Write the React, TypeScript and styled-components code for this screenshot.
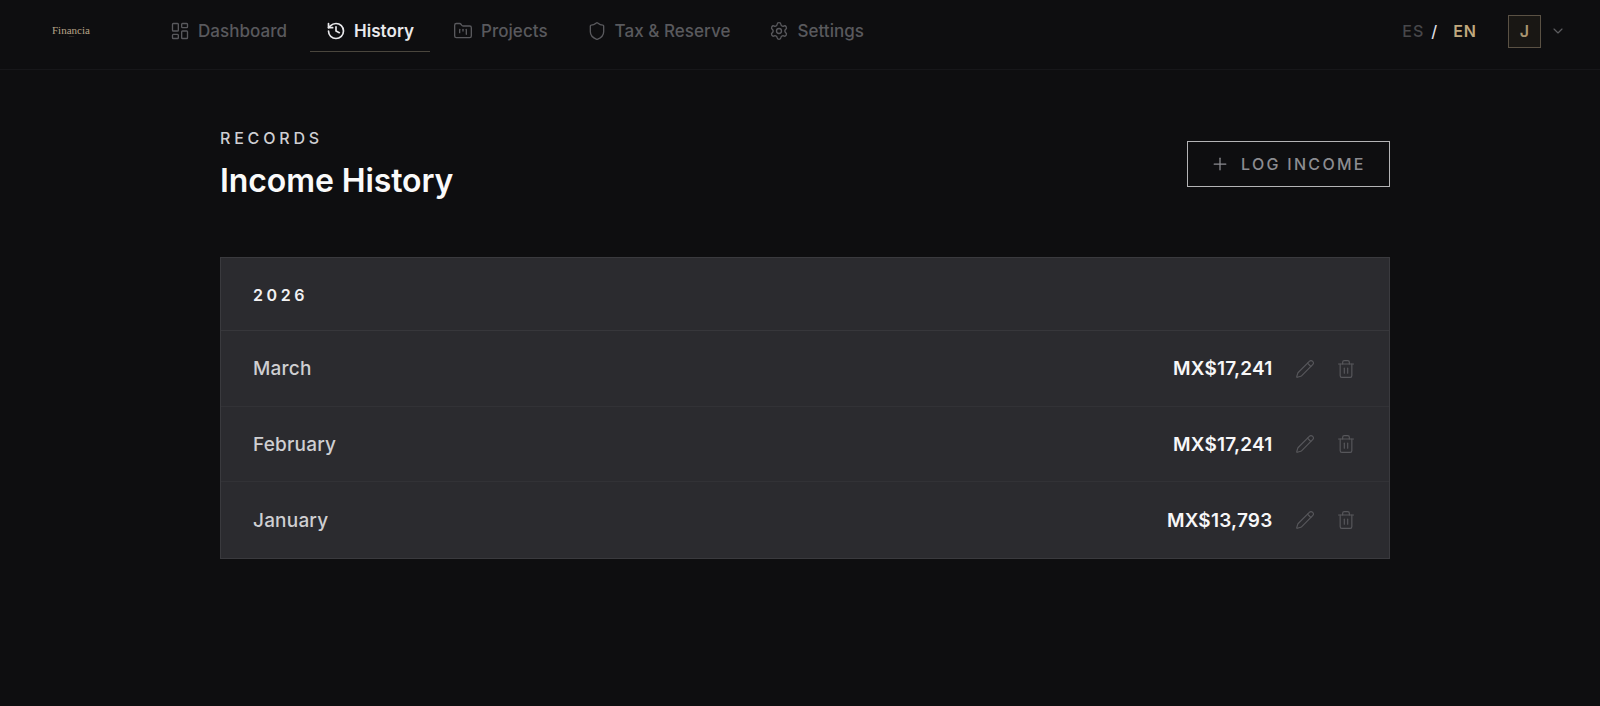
import styled, { createGlobalStyle } from "styled-components";
import {
  ChevronDown,
  FolderKanban,
  History,
  LayoutDashboard,
  Pencil,
  Plus,
  Settings,
  Shield,
  Trash2,
} from "lucide-react";

const GlobalStyle = createGlobalStyle`
  html, body {
    margin: 0;
    padding: 0;
    background: #0e0e10;
    font-family: "Inter", "Liberation Sans", sans-serif;
    font-optical-sizing: none;
  }
  * {
    box-sizing: border-box;
  }
`;

const records = [
  { month: "March", amount: "MX$17,241" },
  { month: "February", amount: "MX$17,241" },
  { month: "January", amount: "MX$13,793" },
];

const navItems = [
  { label: "Dashboard", icon: LayoutDashboard },
  { label: "History", icon: History, active: true },
  { label: "Projects", icon: FolderKanban },
  { label: "Tax & Reserve", icon: Shield },
  { label: "Settings", icon: Settings },
];

const App = () => {
  return (
    <Page>
      <GlobalStyle />
      <Header>
        <Logo>
          Financia
          <LogoSub>studio</LogoSub>
        </Logo>
        <Nav>
          {navItems.map((item) => (
            <NavItem key={item.label} $active={item.active}>
              <item.icon size={20} strokeWidth={item.active ? 2 : 1.6} />
              {item.label}
            </NavItem>
          ))}
        </Nav>
        <HeaderRight>
          <LangSwitch>
            <Lang>ES</Lang>
            <Slash>/</Slash>
            <Lang $active>EN</Lang>
          </LangSwitch>
          <UserMenu>
            <Avatar>J</Avatar>
            <ChevronDown size={16} strokeWidth={1.75} color="#5c5c60" />
          </UserMenu>
        </HeaderRight>
      </Header>
      <Main>
        <TitleRow>
          <div>
            <Eyebrow>RECORDS</Eyebrow>
            <Title>Income History</Title>
          </div>
          <LogButton>
            <Plus size={20} strokeWidth={1.5} />
            LOG INCOME
          </LogButton>
        </TitleRow>
        <Card>
          <YearRow>2026</YearRow>
          {records.map((record) => (
            <Row key={record.month}>
              <Month>{record.month}</Month>
              <RowRight>
                <Amount>{record.amount}</Amount>
                <Actions>
                  <Pencil size={20} strokeWidth={1.4} />
                  <Trash2 size={20} strokeWidth={1.4} />
                </Actions>
              </RowRight>
            </Row>
          ))}
        </Card>
      </Main>
    </Page>
  );
};

export default App;

const Page = styled.div`
  min-height: 706px;
  background: #0e0e10;
`;

const Header = styled.header`
  display: flex;
  align-items: center;
  height: 70px;
  padding: 0 33px 8px 52px;
  border-bottom: 1px solid #17171a;
`;

const Logo = styled.div`
  width: 102px;
  margin-top: 3px;
  display: flex;
  flex-direction: column;
  font-family: "Liberation Serif", serif;
  font-size: 11px;
  line-height: 9px;
  color: #b8a488;
`;

const LogoSub = styled.span`
  font-size: 2px;
  line-height: 3px;
  padding-left: 17px;
  color: #77685a;
`;

const Nav = styled.nav`
  display: flex;
  align-items: center;
  gap: 7px;
`;

const NavItem = styled.a<{ $active?: boolean }>`
  display: flex;
  align-items: center;
  gap: 8px;
  height: 41px;
  padding: 0 16px;
  margin-top: 1px;
  font-size: 17px;
  font-weight: ${(props) => (props.$active ? 600 : 500)};
  letter-spacing: 0.04px;
  color: ${(props) => (props.$active ? "#e9e9ec" : "#59595d")};
  border-bottom: 1px solid ${(props) => (props.$active ? "#4a463d" : "transparent")};
`;

const HeaderRight = styled.div`
  margin-left: auto;
  display: flex;
  align-items: center;
  gap: 31px;
`;

const LangSwitch = styled.div`
  display: flex;
  align-items: center;
  gap: 8px;
  font-size: 16px;
  font-weight: 500;
  letter-spacing: 1px;
`;

const Lang = styled.span<{ $active?: boolean }>`
  color: ${(props) => (props.$active ? "#c0a97f" : "#47474a")};
  font-weight: ${(props) => (props.$active ? 600 : 500)};
`;

const Slash = styled.span`
  color: #dcdce0;
  margin: 0 7px 0 -1px;
`;

const UserMenu = styled.div`
  display: flex;
  align-items: center;
  gap: 9px;
  padding-right: 1px;
`;

const Avatar = styled.div`
  width: 33px;
  height: 33px;
  margin-top: 1px;
  display: flex;
  align-items: center;
  justify-content: center;
  background: #191714;
  border: 1px solid #5a5144;
  color: #a8946f;
  font-size: 16px;
  font-weight: 600;
`;

const Main = styled.main`
  width: 1170px;
  margin-left: 220px;
`;

const TitleRow = styled.div`
  display: flex;
  align-items: flex-start;
  justify-content: space-between;
  padding-top: 60px;
  height: 187px;
`;

const Eyebrow = styled.div`
  font-size: 16px;
  line-height: 17px;
  font-weight: 500;
  letter-spacing: 3.8px;
  color: #cfcfd3;
`;

const Title = styled.h1`
  margin: 14px 0 0;
  font-size: 32px;
  line-height: 40px;
  font-weight: 600;
  letter-spacing: -0.1px;
  color: #fafafa;
`;

const LogButton = styled.button`
  display: flex;
  align-items: center;
  gap: 11px;
  width: 203px;
  height: 46px;
  margin-top: 11px;
  padding: 0 22px;
  background: transparent;
  border: 1px solid #b4b4b6;
  font-family: inherit;
  font-size: 16px;
  font-weight: 500;
  letter-spacing: 2.3px;
  color: #8c8c91;
`;

const Card = styled.section`
  background: #2b2b2f;
  border: 1px solid #3a3a3e;
`;

const YearRow = styled.div`
  display: flex;
  align-items: center;
  height: 73px;
  padding: 2px 32px 0;
  border-bottom: 1px solid #37373b;
  font-size: 16px;
  font-weight: 600;
  letter-spacing: 3.6px;
  color: #f2f2f3;
`;

const Row = styled.div`
  display: flex;
  align-items: center;
  justify-content: space-between;
  height: 75.5px;
  padding: 1px 33px 0 32px;
  border-bottom: 1px solid #323236;
  &:last-child {
    border-bottom: none;
  }
`;

const Month = styled.span`
  font-size: 19px;
  font-weight: 500;
  letter-spacing: 0.2px;
  color: #cfcfd2;
`;

const RowRight = styled.div`
  display: flex;
  align-items: center;
  gap: 22px;
`;

const Amount = styled.span`
  font-size: 19px;
  font-weight: 600;
  letter-spacing: 0.2px;
  color: #f7f7f8;
`;

const Actions = styled.div`
  display: flex;
  align-items: center;
  gap: 21.5px;
  color: #57575b;
`;
